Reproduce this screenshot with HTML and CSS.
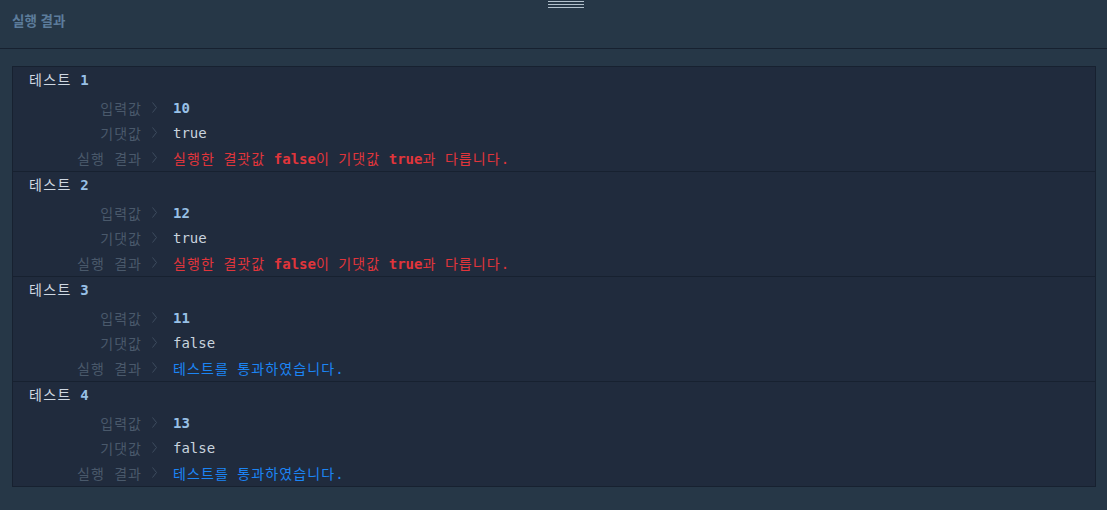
FILE: index.html
```html
<!DOCTYPE html>
<html lang="ko">
<head>
<meta charset="utf-8">
<link rel="stylesheet" href="styles.css">
</head>
<body>
<div class="page">
  <header class="header">
    <div class="handle"><span></span><span></span><span></span></div>
    <h2 class="header-title">실행 결과</h2>
  </header>
  <main class="main">
    <div class="panel">
      <section class="test">
        <div class="test-title"><span class="ko">테스트</span> <b class="num">1</b></div>
        <div class="row"><span class="label">입력값</span><svg class="chev" viewBox="0 0 5 11"><polyline points="0.5,0.5 4.5,5.5 0.5,10.5"/></svg><span class="value num">10</span></div>
        <div class="row"><span class="label">기댓값</span><svg class="chev" viewBox="0 0 5 11"><polyline points="0.5,0.5 4.5,5.5 0.5,10.5"/></svg><span class="value">true</span></div>
        <div class="row"><span class="label">실행 결과</span><svg class="chev" viewBox="0 0 5 11"><polyline points="0.5,0.5 4.5,5.5 0.5,10.5"/></svg><span class="value fail"><span class="ko">실행한</span> <span class="ko">결괏값</span> <b>false</b><span class="ko">이</span> <span class="ko">기댓값</span> <b>true</b><span class="ko">과</span> <span class="ko">다릅니다</span>.</span></div>
      </section>
      <section class="test">
        <div class="test-title"><span class="ko">테스트</span> <b class="num">2</b></div>
        <div class="row"><span class="label">입력값</span><svg class="chev" viewBox="0 0 5 11"><polyline points="0.5,0.5 4.5,5.5 0.5,10.5"/></svg><span class="value num">12</span></div>
        <div class="row"><span class="label">기댓값</span><svg class="chev" viewBox="0 0 5 11"><polyline points="0.5,0.5 4.5,5.5 0.5,10.5"/></svg><span class="value">true</span></div>
        <div class="row"><span class="label">실행 결과</span><svg class="chev" viewBox="0 0 5 11"><polyline points="0.5,0.5 4.5,5.5 0.5,10.5"/></svg><span class="value fail"><span class="ko">실행한</span> <span class="ko">결괏값</span> <b>false</b><span class="ko">이</span> <span class="ko">기댓값</span> <b>true</b><span class="ko">과</span> <span class="ko">다릅니다</span>.</span></div>
      </section>
      <section class="test">
        <div class="test-title"><span class="ko">테스트</span> <b class="num">3</b></div>
        <div class="row"><span class="label">입력값</span><svg class="chev" viewBox="0 0 5 11"><polyline points="0.5,0.5 4.5,5.5 0.5,10.5"/></svg><span class="value num">11</span></div>
        <div class="row"><span class="label">기댓값</span><svg class="chev" viewBox="0 0 5 11"><polyline points="0.5,0.5 4.5,5.5 0.5,10.5"/></svg><span class="value">false</span></div>
        <div class="row"><span class="label">실행 결과</span><svg class="chev" viewBox="0 0 5 11"><polyline points="0.5,0.5 4.5,5.5 0.5,10.5"/></svg><span class="value pass"><span class="ko">테스트를</span> <span class="ko">통과하였습니다</span>.</span></div>
      </section>
      <section class="test">
        <div class="test-title"><span class="ko">테스트</span> <b class="num">4</b></div>
        <div class="row"><span class="label">입력값</span><svg class="chev" viewBox="0 0 5 11"><polyline points="0.5,0.5 4.5,5.5 0.5,10.5"/></svg><span class="value num">13</span></div>
        <div class="row"><span class="label">기댓값</span><svg class="chev" viewBox="0 0 5 11"><polyline points="0.5,0.5 4.5,5.5 0.5,10.5"/></svg><span class="value">false</span></div>
        <div class="row"><span class="label">실행 결과</span><svg class="chev" viewBox="0 0 5 11"><polyline points="0.5,0.5 4.5,5.5 0.5,10.5"/></svg><span class="value pass"><span class="ko">테스트를</span> <span class="ko">통과하였습니다</span>.</span></div>
      </section>
    </div>
  </main>
</div>
</body>
</html>
```
FILE: styles.css
```css
* { box-sizing: border-box; }
html, body { margin: 0; padding: 0; }
body {
  background: #263747;
  width: 1107px;
  height: 510px;
  overflow: hidden;
  font-family: "DejaVu Sans Mono", "Noto Sans CJK KR", monospace;
}
.page { display: flex; flex-direction: column; }
.header {
  position: relative;
  height: 49px;
  border-bottom: 1px solid #172130;
  padding: 0 12px;
  display: flex;
  align-items: center;
}
.handle {
  position: absolute;
  left: 548px;
  top: 1px;
  width: 36px;
  display: flex;
  flex-direction: column;
  gap: 2px;
}
.handle span { display: block; height: 1px; background: #b2c0cc; }
.header-title {
  margin: 0 0 8px;
  font-family: "Noto Sans CJK KR", "Noto Sans", sans-serif;
  font-size: 13.5px;
  font-weight: 700;
  color: #5c7c9b;
}
.main { padding: 17px 11px 0 12px; }
.panel {
  background: #202b3d;
  border: 1px solid #172130;
}
.test {
  padding-top: 1px;
  border-bottom: 1px solid #172130;
  height: 105px;
}
.test:last-child { border-bottom: 0; height: 104px; }
.test-title {
  height: 27px;
  line-height: 25px;
  padding-left: 16px;
  font-size: 14px;
  color: #cfd8e2;
}
.ko { letter-spacing: 1.1px; }
.test-title .ko { letter-spacing: 1.4px; }
.test-title .num, .value.num { color: #98c0e6; font-weight: 700; }
.row {
  display: flex;
  align-items: center;
  height: 25px;
  font-size: 14px;
}
.label {
  width: 129px;
  text-align: right;
  color: #4a596b;
  letter-spacing: 1px;
  white-space: pre;
}
.chev {
  width: 5px;
  height: 11px;
  margin: 0 16px 0 10px;
  fill: none;
  stroke: #3e4d5f;
  stroke-width: 1;
}
.value { color: #c9d3de; white-space: pre; }
.fail { color: #e1353b; }
.fail b { font-weight: 700; }
.pass { color: #1c85f5; }
```
